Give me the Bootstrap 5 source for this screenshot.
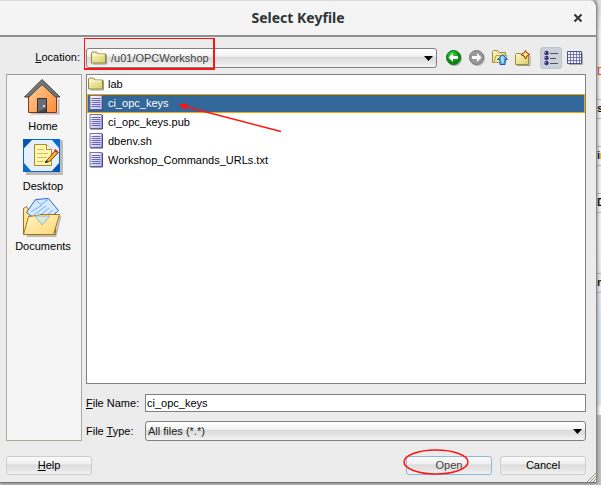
<!DOCTYPE html>
<html lang="en">
<head>
<meta charset="utf-8">
<meta name="viewport" content="width=device-width, initial-scale=1">
<title>Select Keyfile</title>
<link href="https://cdn.jsdelivr.net/npm/bootstrap@5.3.0/dist/css/bootstrap.min.css" rel="stylesheet">
<style>
body{font-family:"Liberation Sans",Arial,sans-serif;font-size:11px;line-height:14px;color:#000;background:#c4c4c4;overflow:hidden}
.shell{min-height:100vh;padding-bottom:2px}
.dialog{background:#ececec;border-right:1px solid #8a8a8a;border-bottom:1px solid #777;border-top:1px solid #dcdcdc;border-radius:0 7px 0 0;box-shadow:0 0 4px #666;z-index:1;min-width:0}
.titlebar{height:36px;background:#f4f4f4;border-bottom:2px solid #8f8f8f;border-radius:0 7px 0 0}
.titlebar h1{font:bold 14px/18px "Noto Sans",sans-serif;color:#2e3436}
.close-btn{width:16px;height:16px;right:10px;top:9px}
.plain{border:0;background:none;padding:0;display:block}
.plain svg,.file svg,.place svg{display:block}
.toolbar{padding:11px 13px 6px 6px}
.loc-label{width:76px;text-align:right;padding:0 2px 2px 0}
.combo{height:20px;width:100%;appearance:none;border:1px solid #808080;border-radius:3px;padding:0 20px 0 2px;font-size:11px;color:#222;background:url("data:image/svg+xml,%3Csvg xmlns='http://www.w3.org/2000/svg' width='9' height='5'%3E%3Cpath d='M0 0h9L4.500 5z'/%3E%3C/svg%3E") right 3px center no-repeat,linear-gradient(#fff 0,#f3f3f3 40%,#dadada 46%,#e6e6e6 75%,#f4f4f4)}
.combo.with-icon{padding-left:24px;padding-bottom:1px;color:#444}
.combo-icon{left:5px;top:2px;pointer-events:none}
.tools{gap:7px;margin-left:9px}
.toggle{width:22px;height:22px;background:#c9d1db;border:1px solid #bcc4ce;border-radius:3px;padding:2px;margin:-1px -2px -1px 2px}
.content{gap:4px;padding:0 10px 0 6px}
.places{width:76px;background:#f5f5f5;border:1px solid #a9ad95;border-top-color:#999;padding-top:2px}
.place{border:0;background:none;padding:0 2px 0 0;height:60px;width:100%;display:flex;flex-direction:column;align-items:center;color:#000}
.place span{margin-top:2px}
.files{background:#fff;border:1px solid #808080;border-radius:0}
.file{height:19px;padding:0 1px 2px;gap:4px;border:0;background:none;color:#000;display:flex;align-items:center;text-align:left;width:100%}
.file.selected{background:#336699;box-shadow:inset 0 0 0 1px #f5a400;color:#fff}
.field-label{width:59px}
.form-lines{padding-top:10px;gap:9px}
.name-box{height:18px;border:1px solid #808080;background:#fff;padding:0 1px;font-size:11px;min-width:0;color:#000}
.footer-bar{padding:15px 10px 7px 6px;gap:8px}
.push{width:86px;height:19px;border:1px solid #cecece;border-radius:3px;padding:0 0 2px;font-size:11px;line-height:14px;color:#000;background:linear-gradient(#fafafa 0,#f0f0f0 40%,#dcdcdc 46%,#e5e5e5 75%,#f3f3f3)}
.push.default{border-color:#8ab6df;color:#444}
.red-box{left:-2px;top:-10px;width:131px;height:32px;border:2px solid #ff1414;border-width:1px 2px 2px 1px;pointer-events:none}
.red-arrow{left:90px;top:26px;pointer-events:none}
.red-oval{left:-4px;top:-8px;pointer-events:none}
.grip{right:0;bottom:0}
.behind{width:4px;background:linear-gradient(#ddd 0,#f7f7f7 30px,#f7f7f7 240px,#dfe8f0 330px,#e2eaf1 405px,#fff 406px);margin-bottom:68px;font:bold 11px/14px "Liberation Sans",sans-serif;padding-top:64px}
.behind div{border-top:1px solid #bbb;border-bottom:1px solid #bbb;height:20px;margin-bottom:27px;padding-top:1px;overflow:hidden}
.behind .req{color:#e22;border:0;font-weight:normal;margin-bottom:15px;padding:0}
.behind .last{margin-top:60px}
</style>
<script src="https://cdn.jsdelivr.net/npm/bootstrap@5.3.0/dist/js/bootstrap.bundle.min.js"></script>
</head>
<body>
<svg width="0" height="0" class="position-absolute" aria-hidden="true">
<defs>
<linearGradient id="fg" x2="1" y2="1"><stop stop-color="#fbf8c8"/><stop offset="1" stop-color="#d9cf67"/></linearGradient>
<linearGradient id="pg" x2="1" y2="1"><stop stop-color="#fff"/><stop offset="1" stop-color="#b9b9ed"/></linearGradient>
<linearGradient id="hg" x2="1" y2="1"><stop stop-color="#ffd2a0"/><stop offset="1" stop-color="#ff8b34"/></linearGradient>
<linearGradient id="dg" x2="1" y2="1"><stop stop-color="#fff4c4"/><stop offset="1" stop-color="#ffd777"/></linearGradient>
<radialGradient id="gg" cx=".4" cy=".3"><stop stop-color="#42d542"/><stop offset="1" stop-color="#078a12"/></radialGradient>
<symbol id="folder" viewBox="0 0 16 14"><path d="M2 13.500h13.500V4" fill="none" stroke="#999" /><path d="M.5 12.500V2.500l1-1h4l1.500 2h7.500v9z" fill="url(#fg)" stroke="#92883a"/><path d="M1.500 4.500h12" stroke="#fffce0"/></symbol>
<symbol id="page" viewBox="0 0 15 16"><path d="M1.500.5h12v14h-12z" fill="url(#pg)" stroke="#7474a8"/><path d="M2 15h12V1" fill="none" stroke="#4a4a78"/><path d="M3 3.500h9M3 5.500h9M3 7.500h9M3 9.500h9M3 11.500h9" stroke="#6767b5"/></symbol>
</defs>
</svg>
<div class="shell d-flex">
<main class="dialog flex-grow-1 d-flex flex-column position-relative">
<header class="titlebar d-flex align-items-center justify-content-center position-relative">
<h1 class="m-0">Select Keyfile</h1>
<button class="plain close-btn position-absolute" aria-label="Close"><svg width="16" height="16"><path d="M4.500 4.500l7 7M11.500 4.500l-7 7" stroke="#2e3436" stroke-width="2"/></svg></button>
</header>
<div class="toolbar d-flex align-items-center">
<label class="loc-label flex-shrink-0" for="location"><u>L</u>ocation:</label>
<div class="position-relative flex-grow-1 ms-1">
<select class="combo with-icon d-block" id="location"><option>/u01/OPCWorkshop</option></select>
<svg class="combo-icon position-absolute" width="16" height="15"><use href="#folder"/></svg>
<div class="red-box position-absolute"></div>
</div>
<div class="tools d-flex align-items-center">
<button class="plain" aria-label="Back"><svg width="16" height="16"><circle cx="8.500" cy="8.500" r="7.500" fill="#aaa"/><circle cx="7.500" cy="7.500" r="7" fill="url(#gg)" stroke="#087511"/><path d="M2.500 7.500L7 3v3h5v3H7v3z" fill="#fff"/></svg></button>
<button class="plain" aria-label="Forward"><svg width="16" height="16"><circle cx="8.500" cy="8.500" r="7.500" fill="#bbb"/><circle cx="7.500" cy="7.500" r="7" fill="#999" stroke="#777"/><path d="M12.500 7.500L8 3v3H3v3h5v3z" fill="#fff"/></svg></button>
<button class="plain" aria-label="Up one level"><svg width="16" height="16"><path d="M.5 12.500v-11l1-1h4l1.500 2h6.500v10z" fill="url(#fg)" stroke="#9c8e32"/><path d="M2 12.500l2-7h11l-2 7z" fill="#f1e9a0" stroke="#b5a548"/><path d="M10.500 4.500l5 5h-2.500v5H8v-5H5.500z" fill="#58b5ff" stroke="#1756b8"/><path d="M10.500 6.500v6" stroke="#c9ebff" stroke-width="2"/></svg></button>
<button class="plain" aria-label="New folder"><svg width="16" height="16"><path d="M2 15.500h13V6" fill="none" stroke="#999"/><path d="M.5 14.500v-10l1-1h4l1.500 2h6.500v9z" fill="url(#fg)" stroke="#9c8e32"/><path d="M10.500.5l1.500 2.500L15 4.500l-3 1.500-1.500 3L9 6 6 4.500 9 3z" fill="#ffdc3c" stroke="#a92112"/><path d="M10.500 2v5M8 4.500h5" stroke="#fff58a"/></svg></button>
<button class="toggle" aria-label="List view" aria-pressed="true"><svg class="d-block" width="16" height="16"><g fill="#34347c"><circle cx="3.500" cy="3" r="2.200"/><circle cx="3.500" cy="8" r="2.200"/><circle cx="3.500" cy="13" r="2.200"/></g><path d="M2 2.500h1M2 7.500h1M2 12.500h1" stroke="#b5b5e6"/><path d="M7 3.500h8M7 8.500h6M7 13.500h8" stroke="#555"/></svg></button>
<button class="plain" aria-label="Details view"><svg width="16" height="16"><path d="M2 14.500h13.500V3" fill="none" stroke="#aaa"/><path d="M.5 1.500h14v12H.5z" fill="#f5f5ff" stroke="#4e4e92"/><path d="M1 4.500h13M1 7.500h13M1 10.500h13M3.500 2v11M6.500 2v11M9.500 2v11M12.500 2v11" stroke="#7777b8"/></svg></button>
</div>
</div>
<div class="content d-flex flex-grow-1">
<nav class="places flex-shrink-0" aria-label="Places">
<button class="place"><svg width="40" height="40"><path d="M8 36.500h27.500V22" fill="none" stroke="#bbb" stroke-width="2"/><path d="M5.500 17.500L19 4l14.500 13.500v18h-28z" fill="url(#hg)" stroke="#8a3518"/><path d="M1.500 20L19 2.500 37 20h-4.500L19 7.500 6 20z" fill="#777" stroke="#414141"/><path d="M14.500 21.500h9v14h-9z" fill="#6c6c78" stroke="#333"/><path d="M15 35l8-4v4z" fill="#444"/><circle cx="21" cy="29" r="1" fill="#fff"/></svg><span>Home</span></button>
<button class="place"><svg width="40" height="40"><path d="M3 3h37v35H3z" fill="#bbb"/><path d="M0 2h37v33H0z" fill="#0968d2"/><path d="M8 3h21l7 8v15l-7 8H8l-7-8V11z" fill="#e5efff"/><path d="M0 2l9 1-8 8zM37 35l-8-1 7-7z" fill="#0055b5"/><path d="M11.500 7.500h12l5 5v16h-17z" fill="#fff7b5" stroke="#b28a12"/><path d="M23.500 7.500v5h5" fill="#fff" stroke="#b28a12"/><path d="M14 12.500h7M14 16.500h11M14 20.500h10M14 24.500h7" stroke="#d9bc52"/><path d="M22.500 25.500l2-3 8-9 3 2-9 9z" fill="#ffb22d" stroke="#7a3515"/><path d="M31 14l3 2 1-2-3-2z" fill="#d43030"/><path d="M22 26l1-3 2 2z" fill="#222"/></svg><span>Desktop</span></button>
<button class="place"><svg width="40" height="40"><path d="M4 39h28.500l5-20" fill="none" stroke="#bbb" stroke-width="2"/><path d="M.5 37.500v-26l3-2 3 5h26v23z" fill="#ffe69a" stroke="#a37318"/><path d="M3.500 15.500L12.500 2.500l13-1 10 12-16 14z" fill="#d5eaff" stroke="#2766cc"/><path d="M12 2.500l6 5 7-5M8 15l11-7M11 18l12-9M15 20l11-9M19 22l11-9" fill="none" stroke="#78aaf0"/><path d="M.5 37.500l5-18 9-1 2-1h20l-6 20z" fill="url(#dg)" stroke="#a37318"/><path d="M12 19h15l-8 9z" fill="#d8e8dc" stroke="#9bb9b2"/></svg><span>Documents</span></button>
</nav>
<div class="flex-grow-1 d-flex flex-column">
<div class="files list-group flex-grow-1 position-relative">
<button class="file"><svg width="16" height="15"><use href="#folder"/></svg>lab</button>
<button class="file selected"><svg width="16" height="16"><use href="#page"/></svg>ci_opc_keys</button>
<button class="file"><svg width="16" height="16"><use href="#page"/></svg>ci_opc_keys.pub</button>
<button class="file"><svg width="16" height="16"><use href="#page"/></svg>dbenv.sh</button>
<button class="file"><svg width="16" height="16"><use href="#page"/></svg>Workshop_Commands_URLs.txt</button>
<svg class="red-arrow position-absolute" width="106" height="34"><path d="M8 5.500l96 25" stroke="#ff1414" stroke-width="1.500"/><path d="M1 3.500l10-1-2 6.500z" fill="#ff1414"/></svg>
</div>
<div class="form-lines d-flex flex-column">
<div class="d-flex align-items-center">
<label class="field-label flex-shrink-0" for="fname"><u>F</u>ile Name:</label>
<input class="name-box flex-grow-1" id="fname" type="text" value="ci_opc_keys">
</div>
<div class="d-flex align-items-center">
<label class="field-label flex-shrink-0" for="ftype">File <u>T</u>ype:</label>
<select class="combo" id="ftype"><option>All files (*.*)</option></select>
</div>
</div>
</div>
</div>
<footer class="footer-bar d-flex">
<button class="push me-auto"><u>H</u>elp</button>
<div class="position-relative"><button class="push default d-block">Open</button>
<svg class="red-oval position-absolute" width="70" height="32"><ellipse cx="34" cy="14" rx="32" ry="12" fill="none" stroke="#ff1414" stroke-width="1.500"/></svg></div>
<button class="push">Cancel</button>
</footer>
<svg class="grip position-absolute" width="9" height="9"><path d="M0 9l9-9M3 9l6-6M6 9l3-3" stroke="#9c9c7c"/></svg>
</main>
<aside class="behind flex-shrink-0 overflow-hidden" aria-hidden="true">
<div class="req">D</div><div>s</div><div>in</div><div>D</div><div class="last">ne</div>
</aside>
</div>
</body>
</html>
